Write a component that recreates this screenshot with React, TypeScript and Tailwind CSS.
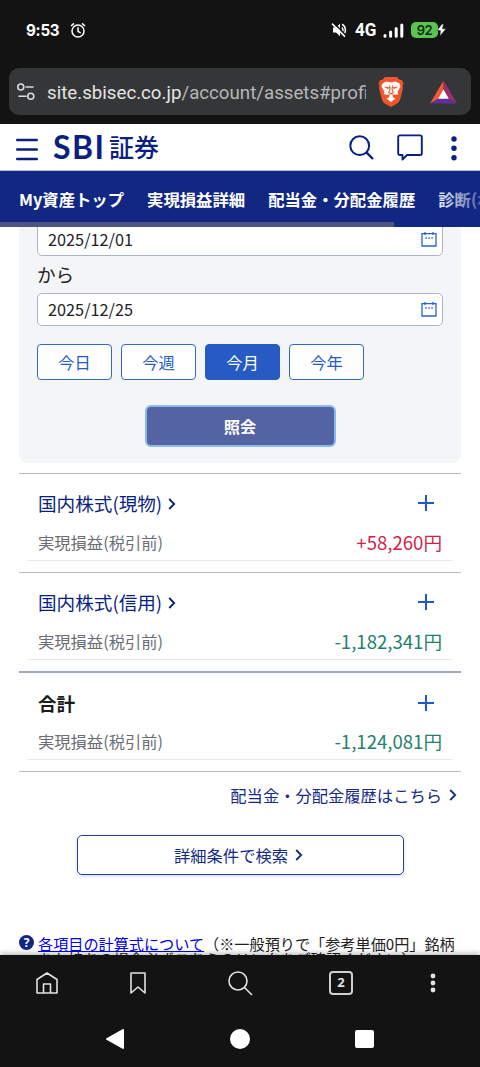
interface SummaryRowProps {
  title: string;
  amount: string;
  gain?: boolean;
  total?: boolean;
}

const NAV_ITEMS = ['My資産トップ', '実現損益詳細', '配当金・分配金履歴', '診断(ポート'];
const PERIODS = ['今日', '今週', '今月', '今年'];

function Chevron() {
  return (
    <svg width="8" height="12" viewBox="0 0 8 12" fill="none" stroke="currentColor" strokeWidth="1.8">
      <path d="M1.2 1l5 5-5 5" />
    </svg>
  );
}

function StatusBar() {
  return (
    <div className="flex h-[68px] shrink-0 items-start justify-between pl-[26px] pr-[42px] pt-[18px] text-white">
      <div className="flex h-6 items-center gap-[11px]">
        <span className="w-[33px] origin-left scale-x-[0.92] whitespace-nowrap font-['Inter','Noto_Sans',sans-serif] text-[16.5px] font-bold leading-[22px] tracking-[-0.3px]">9:53</span>
        <svg width="16" height="17" viewBox="0 0 16 17" fill="none" stroke="currentColor" strokeWidth="1.5">
          <circle cx="8" cy="9" r="6" />
          <path d="M8 5.3v4l2.7 1.6M1 4l3-2.6M15 4l-3-2.6" />
        </svg>
      </div>
      <div className="flex h-6 items-center">
        <svg width="16" height="16" viewBox="0 0 16 16" fill="none" stroke="currentColor" strokeWidth="1.5">
          <path d="M2 5.5h3l4-3.7v12.4l-4-3.7H2z" fill="currentColor" stroke="none" />
          <path d="M10.8 5.5c1.5 1.3 1.5 3.7 0 5M11 2.3c4.2 2 4.2 8 1.6 10" />
          <path d="M2.5 .5l13 13.5" stroke="#131313" />
          <path d="M1 1.6l13 13" />
        </svg>
        <span className="ml-[8px] w-[22px] origin-left scale-x-[0.9] font-['Roboto',sans-serif] text-[19px] font-bold leading-6">4G</span>
        <svg className="ml-[6px]" width="21" height="15" viewBox="0 0 21 15" fill="none" stroke="currentColor" strokeWidth="3" strokeLinecap="round">
          <path d="M2 12.5v.7M7.6 9v4.2M13.2 5.5v7.7M18.8 2v11.2" />
        </svg>
        <div className="relative ml-[7px] flex h-[16px] w-[27px] items-center justify-center rounded-[5px] bg-[#5bc451] font-['Inter',sans-serif] text-[13px] font-semibold leading-[16px] tracking-[-0.4px] text-[#112910]">
          92
          <svg className="absolute -right-[9px] top-[2px]" width="11" height="12" viewBox="0 0 11 12">
            <path d="M6 0L1 6.6h3.4L4 12l6-7.2H6.5L7.5 0z" fill="#fff" stroke="#131313" strokeWidth=".5" />
          </svg>
        </div>
      </div>
    </div>
  );
}

function AddressBar() {
  return (
    <div className="mx-[9px] mb-[9px] flex h-[47px] shrink-0 items-center rounded-[10px] bg-[#353638] pl-2">
      <svg className="shrink-0" width="18" height="18" viewBox="0 0 18 18" fill="none" stroke="#dcdcdc" strokeWidth="1.6">
        <circle cx="3.8" cy="4" r="3" />
        <circle cx="13.8" cy="13.2" r="3" />
        <path d="M9 4h7M2 13.2h7" strokeLinecap="round" />
      </svg>
      <div className="ml-3 mt-[3px] w-[319px] overflow-hidden whitespace-nowrap font-['Roboto',sans-serif] text-[18.7px] leading-7 text-[#b6b7b8]">
        <span className="text-[#e4e4e4]">site.sbisec.co.jp</span>/account/assets#profit
      </div>
      <svg className="ml-3 shrink-0" width="26" height="31" viewBox="0 0 26 31">
        <path d="M7 1h12l3 3h2l1.500 4-1 2 .5 2-3 12-2 3-7 4-7-4-2-3L1 12l.5-2-1-2L2 4h2z" fill="#f1562b" />
        <path d="M4.500 7.500l4-2 4.500 1 4.500-1 4 2 1 3-3 5.500.8 2-3 1-3-1 .7 3.500 2.500 1-4.500 3.500-4.500-3.500 2.500-1 .7-3.500-3 1-3-1 .8-2-3-5.500z" fill="#fff" />
        <path d="M6.500 11l4 .8-1.500 1.200M19.500 11l-4 .8 1.500 1.200M11.500 9.500l.5 3.500-1.300 3.500L13 18l2.300-1.500L14 13l.5-3.500" fill="none" stroke="#f1562b" strokeWidth="1.100" />
      </svg>
      <svg className="ml-[26px] shrink-0" width="27" height="24" viewBox="0 0 28 24">
        <path d="M14 0L0 24l9-5 5-9z" fill="#f15a38" />
        <path d="M14 0l14 24-9-5-5-9z" fill="#98306e" />
        <path d="M0 24h28l-9-5H9z" fill="#5f3098" />
        <path d="M14 9.5L8.5 19h11z" fill="#fff" />
      </svg>
    </div>
  );
}

function SiteHeader() {
  return (
    <header className="flex h-[47px] shrink-0 items-center border-b border-[#b7bdd7] bg-white px-4 text-[#0a1f80]">
      <svg className="mt-1" width="22" height="23" viewBox="0 0 22 23" stroke="currentColor" strokeWidth="2.4" strokeLinecap="round">
        <path d="M1.2 2h19.6M1.2 11.5h19.6M1.2 21h19.6" />
      </svg>
      <div className="mb-px ml-[15px] flex w-[107px] items-center whitespace-nowrap">
        <span className="w-[55px] font-['Lato',sans-serif] text-[32px] font-bold leading-[44px] tracking-[1.4px]">SBI</span>
        <span className="-mt-px ml-px font-['Noto_Sans_CJK_JP',sans-serif] text-[25px] font-medium leading-[44px]">証券</span>
      </div>
      <svg className="ml-auto" width="25" height="25" viewBox="0 0 25 25" fill="none" stroke="currentColor" strokeWidth="2">
        <circle cx="10.7" cy="10.7" r="9.4" />
        <path d="M17.6 17.6l6.4 6.4" strokeWidth="2.4" />
      </svg>
      <svg className="ml-[23px] mt-[1px]" width="26" height="27" viewBox="0 0 26 27" fill="none" stroke="currentColor" strokeWidth="1.9" strokeLinejoin="round">
        <path d="M3 1.4h20q1.8 0 1.8 1.8v16q0 1.8-1.8 1.8H10l-4.5 4.5V21H3q-1.8 0-1.8-1.8v-16Q1.2 1.4 3 1.4z" />
      </svg>
      <svg className="ml-[28px] mr-[7px] mt-[3px]" width="6" height="25" viewBox="0 0 6 25" fill="currentColor">
        <circle cx="3" cy="3" r="2.7" />
        <circle cx="3" cy="12.3" r="2.7" />
        <circle cx="3" cy="21.8" r="2.7" />
      </svg>
    </header>
  );
}

function AssetNav() {
  return (
    <nav className="relative h-14 shrink-0 overflow-hidden bg-[#112782] text-white">
      <div className="flex h-[57px] items-center gap-[23px] whitespace-nowrap pl-[19px] text-[16.35px] font-bold">
        {NAV_ITEMS.map((item) => (
          <span key={item} className="shrink-0">{item}</span>
        ))}
      </div>
      <div className="absolute right-0 top-0 h-full w-12 bg-gradient-to-r from-[#112782]/0 to-[#112782]/70" />
      <div className="absolute bottom-0 left-0 h-[5px] w-[394px] bg-[#4c5584]" />
    </nav>
  );
}

function DateField({ value }: { value: string }) {
  return (
    <div className="flex h-[33px] items-center justify-between rounded-[5px] border border-[#abb4cb] bg-white pl-[10px] pr-[5px] text-[16.3px] text-[#222]">
      <span>{value}</span>
      <svg width="16" height="15" viewBox="0 0 16 15" fill="none" stroke="#2a63cd" strokeWidth="1.3">
        <path d="M1 1.7h14v12.3H1zM4 0v3M12 0v3" />
        <path d="M4.3 6h1.5M7.3 6h1.5M10.3 6h1.5" />
      </svg>
    </div>
  );
}

function SearchPanel() {
  return (
    <section className="-mt-[4px] rounded-[9px] bg-[#f4f5f7] px-[18px] pb-[16px]">
      <DateField value="2025/12/01" />
      <p className="flex h-[37px] items-center pb-[2px] text-[18.6px] text-[#222]">から</p>
      <DateField value="2025/12/25" />
      <div className="mt-[18px] flex gap-[9px]">
        {PERIODS.map((period) => (
          <button
            key={period}
            className={
              period === '今月'
                ? 'h-9 w-[75px] rounded-[4px] border border-[#265bc4] bg-[#265bc4] text-[16.3px] text-white'
                : 'h-9 w-[75px] rounded-[4px] border border-[#3468cc] bg-white text-[16.3px] text-[#265bc4]'
            }
          >
            {period}
          </button>
        ))}
      </div>
      <button className="mx-auto mt-[25px] block h-[42px] w-[191px] rounded-[6px] border-2 border-[#8ab8ef] bg-[#5464a2] text-[16.3px] font-bold text-white">
        照会
      </button>
    </section>
  );
}

function SummaryRow({ title, amount, gain, total }: SummaryRowProps) {
  return (
    <section>
      <div className={total ? 'flex h-[58px] items-center justify-between pl-[19px] pr-[27px] pt-[2px]' : 'flex h-[58px] items-center justify-between pl-[19px] pr-[27px]'}>
        <h2 className={total ? 'text-[18.6px] font-bold text-[#1a1a1a]' : 'flex items-center gap-[6px] text-[18.6px] text-[#0a1f80]'}>
          {title}
          {!total && <span className="mt-[2px]"><Chevron /></span>}
        </h2>
        <svg width="16" height="16" viewBox="0 0 16 16" stroke="#1f57c8" strokeWidth="2">
          <path d="M8 0v16M0 8h16" />
        </svg>
      </div>
      <div className="mx-[9px] flex h-[29px] items-start justify-between border-b border-[#e8eaf0] px-[10px]">
        <span className="text-[16.3px] leading-5 text-[#6b6d75]">実現損益(税引前)</span>
        <span className={gain ? 'text-[18.6px] leading-5 text-[#d21f4b]' : 'text-[18.6px] leading-5 text-[#25806f]'}>{amount}</span>
      </div>
    </section>
  );
}

function BrowserBar() {
  return (
    <footer className="relative h-28 shrink-0 bg-[#131313] shadow-[0_-2px_5px_rgba(0,0,0,0.25)]">
      <div className="flex h-14 items-center text-[#e2e2e2]">
        <svg className="ml-[36px]" width="22" height="22" viewBox="0 0 22 22" fill="none" stroke="currentColor" strokeWidth="1.6" strokeLinejoin="round">
          <path d="M1 7.5L11 1l10 6.5V21H1zM7.5 21v-9h7v9" />
        </svg>
        <svg className="ml-[72px]" width="16" height="22" viewBox="0 0 16 22" fill="none" stroke="currentColor" strokeWidth="1.6" strokeLinejoin="round">
          <path d="M1 1h14v20l-7-6-7 6z" />
        </svg>
        <svg className="ml-[82px]" width="25" height="25" viewBox="0 0 25 25" fill="none" stroke="currentColor" strokeWidth="1.6">
          <circle cx="10" cy="10" r="9" />
          <path d="M16.5 16.5l7.5 7.5" />
        </svg>
        <span className="ml-[76px] flex h-6 w-6 items-center justify-center rounded-[4px] border-2 border-[#d0d0d0] font-['Noto_Sans',sans-serif] text-[13px] font-bold">2</span>
        <svg className="ml-[77px]" width="6" height="20" viewBox="0 0 6 20" fill="currentColor">
          <circle cx="3" cy="3" r="2.4" />
          <circle cx="3" cy="10" r="2.4" />
          <circle cx="3" cy="17" r="2.4" />
        </svg>
      </div>
      <div className="flex h-14 items-center">
        <svg className="ml-[106px]" width="18" height="20" viewBox="0 0 18 20" fill="#fff" stroke="#fff" strokeWidth="2" strokeLinejoin="round">
          <path d="M1 10L17 1v18z" />
        </svg>
        <span className="ml-[106px] h-5 w-5 rounded-full bg-white" />
        <span className="ml-[105px] h-[18px] w-[19px] rounded-[2px] bg-white" />
      </div>
    </footer>
  );
}

export default function App() {
  return (
    <div className="flex h-[1067px] w-[480px] flex-col overflow-hidden bg-[#131313] font-['Noto_Sans_CJK_JP',sans-serif]">
      <StatusBar />
      <AddressBar />
      <SiteHeader />
      <AssetNav />
      <main className="h-[728px] shrink-0 overflow-hidden bg-white px-[19px]">
        <SearchPanel />
        <div className="mt-[10px] border-b border-t border-[#b6bbce]">
          <SummaryRow title="国内株式(現物)" amount="+58,260円" gain />
          <div className="mt-[11px] border-t border-[#b6bbce]" />
          <SummaryRow title="国内株式(信用)" amount="-1,182,341円" />
          <div className="mt-[11px] border-t-2 border-[#a0a8c0]" />
          <SummaryRow title="合計" amount="-1,124,081円" total />
          <div className="h-[11px]" />
        </div>
        <a className="mr-[4px] mt-[11px] flex h-6 items-center justify-end gap-[7px] text-[16.3px] text-[#142a85]">
          配当金・分配金履歴はこちら <Chevron />
        </a>
        <button className="mx-auto mt-[28px] flex h-[40px] w-[327px] items-center justify-center gap-[7px] rounded-[5px] border border-[#293f94] pr-[3px] text-[16.3px] text-[#142a85] shadow-[0_1px_3px_rgba(10,31,128,0.2)]">
          詳細条件で検索 <Chevron />
        </button>
        <div className="mt-[60px] flex items-start">
          <span className="flex h-[15px] w-[15px] shrink-0 items-center justify-center rounded-full bg-[#112782] font-['Noto_Sans',sans-serif] text-[12px] font-bold text-white">?</span>
          <p className="ml-[4px] whitespace-nowrap pt-px text-[15.15px] leading-[15px] text-[#222]">
            <a className="text-[#0000ee] underline">各項目の計算式について</a>（※一般預りで「参考単価0円」銘柄
            <br />
            をお持ちの場合必ずこちらのリンクをご確認ください）
          </p>
        </div>
      </main>
      <BrowserBar />
    </div>
  );
}
